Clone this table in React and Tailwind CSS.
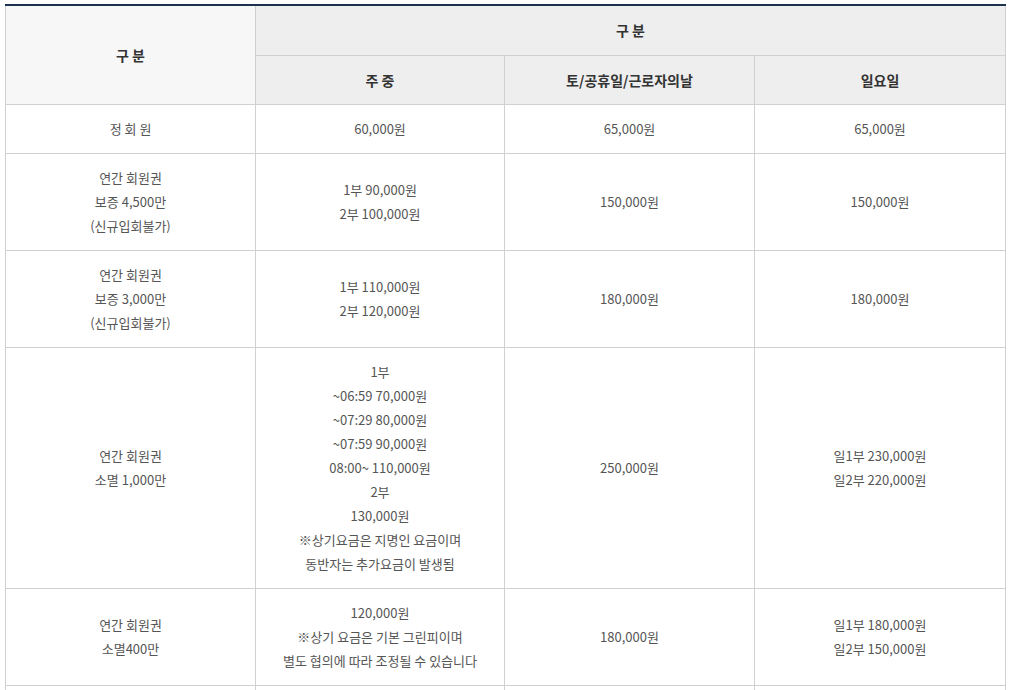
import React from "react";

const rows = [
  { a: ["정 회 원"], b: ["60,000원"], c: ["65,000원"], d: ["65,000원"] },
  {
    a: ["연간 회원권", "보증 4,500만", "(신규입회불가)"],
    b: ["1부 90,000원", "2부 100,000원"],
    c: ["150,000원"],
    d: ["150,000원"],
  },
  {
    a: ["연간 회원권", "보증 3,000만", "(신규입회불가)"],
    b: ["1부 110,000원", "2부 120,000원"],
    c: ["180,000원"],
    d: ["180,000원"],
  },
  {
    a: ["연간 회원권", "소멸 1,000만"],
    b: [
      "1부",
      "~06:59 70,000원",
      "~07:29 80,000원",
      "~07:59 90,000원",
      "08:00~ 110,000원",
      "2부",
      "130,000원",
      "※상기요금은 지명인 요금이며",
      "동반자는 추가요금이 발생됨",
    ],
    c: ["250,000원"],
    d: ["일1부 230,000원", "일2부 220,000원"],
  },
  {
    a: ["연간 회원권", "소멸400만"],
    b: ["120,000원", "※상기 요금은 기본 그린피이며", "별도 협의에 따라 조정될 수 있습니다"],
    c: ["180,000원"],
    d: ["일1부 180,000원", "일2부 150,000원"],
  },
];

function Lines({ items }) {
  return items.map((t, i) => <div key={i}>{t}</div>);
}

export default function App() {
  const td = "border border-[#d0d0d0] px-2 py-3 text-center align-middle";
  const th =
    "border border-[#d0d0d0] bg-[#eeeeee] text-center align-middle text-[14px] font-bold text-[#333]";
  return (
    <div
      className="h-[690px] overflow-hidden bg-white pl-[5px] pt-[4px]"
      style={{ fontFamily: '"Noto Sans CJK KR", "Noto Sans", sans-serif' }}
    >
      <table className="w-[1000px] table-fixed border-collapse border-t-2 border-t-[#1c3350] text-[13px] leading-6 text-[#555]">
        <colgroup>
          <col className="w-[250px]" />
          <col className="w-[249px]" />
          <col className="w-[250px]" />
          <col className="w-[251px]" />
        </colgroup>
        <thead>
          <tr className="h-[50px]">
            <th
              rowSpan={2}
              className="border border-[#d0d0d0] border-t-0 bg-[#f7f7f7] text-center align-middle text-[14px] font-bold text-[#333]"
            >
              구 분
            </th>
            <th colSpan={3} className={th + " border-t-0"}>
              구 분
            </th>
          </tr>
          <tr className="h-[49px]">
            <th className={th}>주 중</th>
            <th className={th}>토/공휴일/근로자의날</th>
            <th className={th}>일요일</th>
          </tr>
        </thead>
        <tbody>
          {rows.map((r, i) => (
            <tr key={i}>
              <td className={td}>
                <Lines items={r.a} />
              </td>
              <td className={td}>
                <Lines items={r.b} />
              </td>
              <td className={td}>
                <Lines items={r.c} />
              </td>
              <td className={td}>
                <Lines items={r.d} />
              </td>
            </tr>
          ))}
          <tr className="h-[49px]">
            <td className={td}></td>
            <td className={td}></td>
            <td className={td}></td>
            <td className={td}></td>
          </tr>
        </tbody>
      </table>
    </div>
  );
}
